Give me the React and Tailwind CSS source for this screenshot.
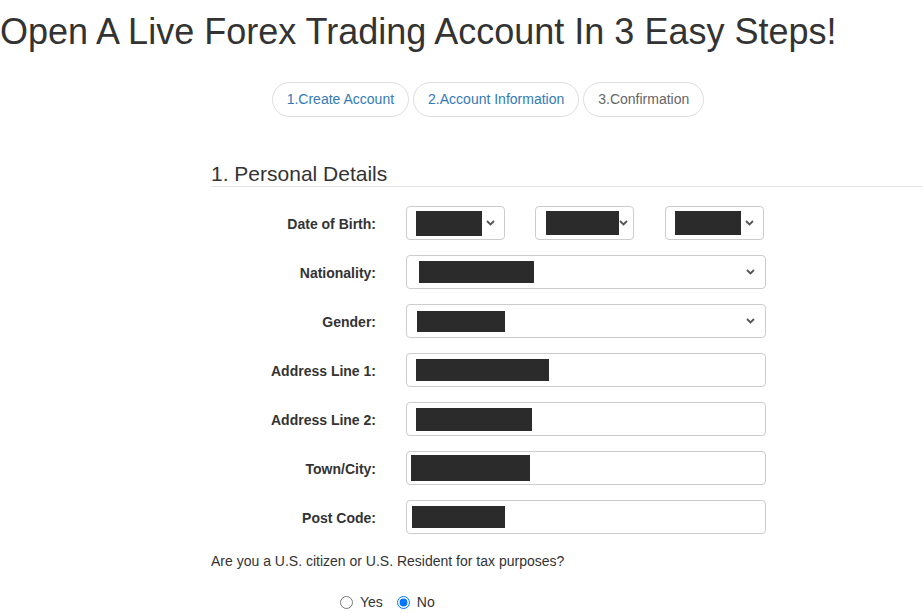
import React from "react";

function Chevron() {
  return (
    <svg width="9" height="6" viewBox="0 0 9 6" className="shrink-0">
      <path d="M1 1 L4.5 4.5 L8 1" fill="none" stroke="#555" strokeWidth="1.8" />
    </svg>
  );
}

function Redact({ w, h, ml }) {
  return <div className="bg-[#2b2b2b]" style={{ width: w, height: h, marginLeft: ml }}></div>;
}

function SelectBox({ width, box, pr = "pr-[9px]" }) {
  return (
    <div
      className={"h-[34px] border border-[#ccc] rounded-[4px] flex items-center justify-between bg-white " + pr}
      style={{ width: width }}
    >
      <Redact {...box} />
      <Chevron />
    </div>
  );
}

function InputBox({ box }) {
  return (
    <div className="w-[360px] h-[34px] border border-[#ccc] rounded-[4px] flex items-center bg-white">
      <Redact {...box} />
    </div>
  );
}

function Row({ label, children }) {
  return (
    <div className="flex items-center h-[34px]">
      <label className="w-[165px] pt-[2px] text-right font-bold text-[14px] text-[#333]">{label}</label>
      <div className="ml-[30px]">{children}</div>
    </div>
  );
}

export default function App() {
  const steps = [
    { text: "1.Create Account", color: "text-[#337ab7]" },
    { text: "2.Account Information", color: "text-[#337ab7]" },
    { text: "3.Confirmation", color: "text-[#666]" },
  ];

  return (
    <div className="min-h-[613px] bg-white text-[#333] font-['Liberation_Sans',Arial,sans-serif]">
      <h1 className="pt-[12px] text-[36px] leading-[40px] text-[#333]">Open A Live Forex Trading Account In 3 Easy Steps!</h1>

      <div className="ml-[211px] w-[554px] mt-[30px] flex justify-center gap-[4px]">
        {steps.map(s => (
          <div
            key={s.text}
            className={"h-[35px] px-[14px] rounded-full border border-[#ddd] flex items-center text-[14px] " + s.color}
          >
            {s.text}
          </div>
        ))}
      </div>

      <h3 className="ml-[211px] mt-[44px] pt-[1px] text-[21px] leading-[24px] border-b border-[#e5e5e5] text-[#333]">
        1. Personal Details
      </h3>

      <div className="ml-[211px] mt-[19px] flex flex-col gap-[15px]">
        <Row label="Date of Birth:">
          <div className="flex">
            <SelectBox width={99} box={{ w: 66, h: 25, ml: 9 }} />
            <div className="ml-[30px]">
              <SelectBox width={99} box={{ w: 74, h: 24, ml: 10 }} pr="pr-[5px]" />
            </div>
            <div className="ml-[31px]">
              <SelectBox width={99} box={{ w: 66, h: 24, ml: 9 }} />
            </div>
          </div>
        </Row>
        <Row label="Nationality:">
          <SelectBox width={360} box={{ w: 115, h: 22, ml: 12 }} pr="pr-[10px]" />
        </Row>
        <Row label="Gender:">
          <SelectBox width={360} box={{ w: 88, h: 21, ml: 10 }} pr="pr-[10px]" />
        </Row>
        <Row label="Address Line 1:">
          <InputBox box={{ w: 133, h: 22, ml: 9 }} />
        </Row>
        <Row label="Address Line 2:">
          <InputBox box={{ w: 116, h: 23, ml: 9 }} />
        </Row>
        <Row label="Town/City:">
          <InputBox box={{ w: 119, h: 26, ml: 4 }} />
        </Row>
        <Row label="Post Code:">
          <InputBox box={{ w: 93, h: 22, ml: 5 }} />
        </Row>
      </div>

      <p className="ml-[211px] mt-[17px] text-[14px] leading-[20px] text-[#333]">
        Are you a U.S. citizen or U.S. Resident for tax purposes?
      </p>

      <div className="ml-[340px] mt-[21px] flex items-center h-[20px] text-[14px] text-[#333]">
        <label className="flex items-center">
          <input type="radio" name="us" className="w-[13px] h-[13px] m-0" />
          <span className="ml-[7px]">Yes</span>
        </label>
        <label className="flex items-center ml-[14px]">
          <input type="radio" name="us" defaultChecked className="w-[13px] h-[13px] m-0" />
          <span className="ml-[7px]">No</span>
        </label>
      </div>
    </div>
  );
}
